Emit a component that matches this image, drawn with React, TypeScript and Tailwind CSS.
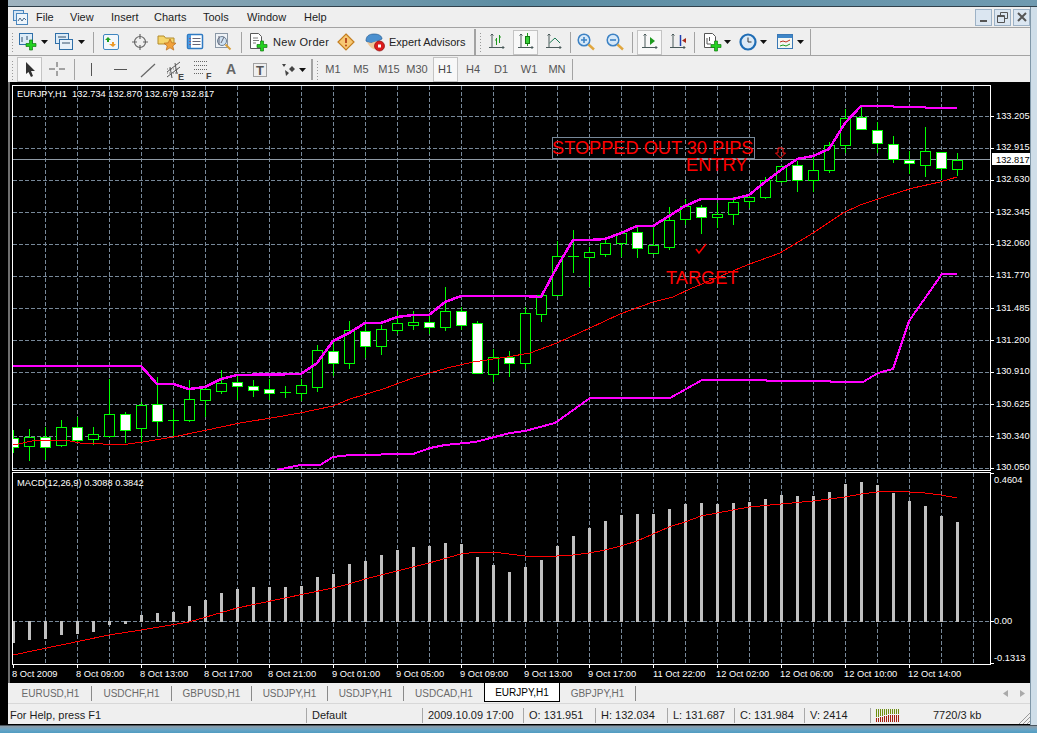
import React from "react";

type Candle = [number, number, number, number, number, number];
// x, body top, body bottom, wick top, wick bottom, white
const candles: Candle[] = [
  [13,438,447,430,453,1],[29,437,446,429,461,0],[45,437,447,427,460,1],[61,427,445,420,447,0],[77,427,440,417,443,1],
  [93,434,439,427,445,0],[109,414,436,379,437,0],[125,414,430,412,443,1],[141,405,428,402,443,0],[157,404,421,377,436,1],
  [173,420,420,409,437,0],[189,399,420,380,422,0],[205,389,400,387,417,0],[221,383,391,370,394,0],[237,382,386,375,400,1],
  [253,386,390,380,397,1],[269,389,393,379,400,1],[285,392,392,386,398,0],[301,385,393,379,401,0],[317,350,387,345,392,0],
  [333,351,363,340,376,1],[349,330,363,321,369,0],[365,331,346,324,358,1],[381,329,346,325,355,0],[397,323,330,311,334,0],
  [413,322,325,311,330,0],[429,322,327,315,334,1],[445,311,327,287,331,0],[461,311,325,307,330,1],[477,323,373,321,374,1],
  [493,357,374,349,382,0],[509,357,363,351,377,1],[525,313,363,307,369,0],[541,295,314,293,322,0],[557,256,295,241,295,0],
  [573,256,256,230,273,0],[589,252,257,247,287,0],[605,243,254,237,257,0],[621,233,243,230,257,0],[637,232,248,227,258,1],
  [653,245,253,226,253,0],[669,220,247,207,250,0],[685,206,219,199,225,0],[701,207,217,205,234,1],[717,214,217,203,228,0],
  [733,202,214,197,225,0],[749,197,201,195,208,0],[765,180,197,177,199,0],[781,166,181,166,183,0],[797,165,180,161,192,1],
  [813,170,180,155,192,0],[829,145,170,142,173,0],[845,118,145,109,153,0],[861,117,129,105,129,1],[877,130,143,122,153,1],
  [893,144,159,136,163,1],[909,160,163,151,174,1],[925,151,165,127,177,0],[941,152,168,152,179,1],[957,160,169,153,176,0],
];

const upper = "13,366 141,366 157,384 173,384 189,389 205,387 221,379 237,375 301,374 317,363 333,341 349,333 365,323 381,323 397,317 413,315 429,315 445,302 461,296 525,296 541,297 557,267 573,240 589,240 605,239 621,233 637,226 653,226 669,216 685,206 701,199 733,199 749,195 765,182 781,170 797,159 813,156 829,149 845,123 861,106 893,106 894,107 925,107 926,108 957,108";
const middle = "13,445 37,440 65,440 80,443 103,444 128,444 143,442 173,437 207,430 240,423 277,417 300,413 333,406 350,399 383,389 413,378 447,368 473,362 507,357 530,353 557,343 590,328 620,314 653,302 673,297 690,289 747,265 780,253 813,233 843,213 860,205 887,196 913,188 940,182 957,177";
const lower = "277,470 300,465 320,465 333,457 350,455 413,454 430,448 445,445 475,442 510,433 525,431 555,423 590,398 670,398 702,380 766,380 767,381 830,381 831,382 863,382 878,373 893,369 909,321 942,274 957,274";
const signal = "13,655 109,635 141,630 189,622 237,608 285,598 333,588 349,584 365,579 397,571 429,563 461,554 477,552 493,552 525,556 541,556 557,556 573,555 589,553 605,550 621,546 637,541 653,534 669,527 685,522 701,516 717,513 749,507 781,504 813,501 845,497 861,494 877,492 893,491 909,492 925,493 941,495 957,498";

const macd: [number, number][] = [
  [13,642],[29,639],[45,638],[61,634],[77,633],[93,631],[109,624],[125,623],[141,615],[157,613],[173,612],[189,606],[205,600],[221,593],[237,589],[253,587],[269,587],[285,587],[301,586],[317,577],[333,574],[349,564],[365,561],[381,555],[397,550],[413,547],[429,546],[445,543],[461,544],[477,557],[493,565],[509,572],[525,567],[541,560],[557,546],[573,536],[589,528],[605,521],[621,515],[637,514],[653,514],[669,509],[685,504],[701,503],[717,504],[733,503],[749,502],[765,499],[781,495],[797,496],[813,496],[829,492],[845,484],[861,482],[877,485],[893,493],[909,501],[925,506],[941,516],[957,522],
];

const gridX = Array.from({ length: 30 }, (_, i) => 45 + i * 32);
const gridY = Array.from({ length: 12 }, (_, i) => 116 + i * 32);
const prices: [string, number][] = [["133.205",119],["132.915",150],["132.630",182],["132.345",215],["132.060",246],["131.770",278],["131.485",311],["131.200",343],["130.910",374],["130.625",407],["130.340",439],["130.050",470]];
const times: [string, number][] = [["8 Oct 2009",12],["8 Oct 09:00",76],["8 Oct 13:00",140],["8 Oct 17:00",204],["8 Oct 21:00",268],["9 Oct 01:00",332],["9 Oct 05:00",396],["9 Oct 09:00",460],["9 Oct 13:00",524],["9 Oct 17:00",588],["11 Oct 22:00",653],["12 Oct 02:00",716],["12 Oct 06:00",780],["12 Oct 10:00",844],["12 Oct 14:00",908]];

function Chart() {
  return (
    <svg viewBox="8 82 1022 601" className="block w-[1022px] h-[601px] bg-black [font-family:'Liberation_Sans',sans-serif]">
      <defs>
        <clipPath id="plot"><rect x="13" y="86" width="977" height="384" /></clipPath>
        <clipPath id="plot2"><rect x="13" y="473" width="977" height="191" /></clipPath>
      </defs>
      <rect x="8" y="82" width="2" height="601" fill="#6e6e6e" />
      <g stroke="#778899" strokeDasharray="3.5 2.5" shapeRendering="crispEdges" strokeWidth="1">
        {gridX.map((x) => (
          <React.Fragment key={x}>
            <line x1={x + 0.5} x2={x + 0.5} y1="86" y2="470" />
            <line x1={x + 0.5} x2={x + 0.5} y1="473" y2="664" />
          </React.Fragment>
        ))}
        {gridY.map((y) => (
          <line key={y} x1="13" x2="990" y1={y + 0.5} y2={y + 0.5} />
        ))}
        <line x1="13" x2="990" y1="621.5" y2="621.5" />
      </g>
      <line x1="13" x2="990" y1="159.5" y2="159.5" stroke="#8f9aa5" shapeRendering="crispEdges" />
      <g clipPath="url(#plot)" shapeRendering="crispEdges">
        {candles.map(([x, t, b, h, l, w]) => (
          <g key={x} stroke="#00ff00">
            <line x1={x + 0.5} x2={x + 0.5} y1={h} y2={l} />
            {t === b ? (
              <line x1={x - 5} x2={x + 6} y1={t + 0.5} y2={t + 0.5} />
            ) : (
              <rect x={x - 4.5} y={t + 0.5} width="10" height={b - t} fill={w ? "#ffffff" : "#000000"} />
            )}
          </g>
        ))}
        <polyline points={middle} fill="none" stroke="#ff0000" strokeWidth="1" />
        <polyline points={upper} fill="none" stroke="#ff00ff" strokeWidth="2.5" />
        <polyline points={lower} fill="none" stroke="#ff00ff" strokeWidth="2" />
      </g>
      <rect x="552.5" y="137.5" width="202" height="21" fill="none" stroke="#778899" shapeRendering="crispEdges" />
      <g fill="#ff0000" className="text-[18.2px]">
        <text x="552" y="153.500">STOPPED OUT 30 PIPS</text>
        <text x="686" y="171">ENTRY</text>
        <text x="666" y="284">TARGET</text>
      </g>
      <path d="M778 148h5v5h2.500l-5 5-5-5h2.500z" fill="none" stroke="#ff1010" strokeWidth="1" />
      <path d="M696 249l3 4 7-9" fill="none" stroke="#ff0000" strokeWidth="1.5" />
      <g clipPath="url(#plot2)" shapeRendering="crispEdges">
        {macd.map(([x, y]) => (
          <rect key={x} x={x - 1} y={Math.min(y, 621)} width="3" height={Math.abs(621 - y) + 1} fill="#c0c0c0" />
        ))}
        <polyline points={signal} fill="none" stroke="#ff0000" strokeWidth="1" />
      </g>
      <g fill="none" stroke="#ffffff" shapeRendering="crispEdges">
        <rect x="12.5" y="85.500" width="978" height="385" />
        <rect x="12.5" y="472.500" width="978" height="192" />
        {times.map(([, x], i) => (
          <line key={i} x1={13 + i * 64 + 0.5} x2={13 + i * 64 + 0.5} y1="665" y2="668" />
        ))}
        {gridY.map((y) => (
          <line key={y} x1="991" x2="994" y1={y + 0.5} y2={y + 0.5} />
        ))}
        <line x1="991" x2="994" y1="473.500" y2="473.500" />
        <line x1="991" x2="994" y1="621.500" y2="621.500" />
        <line x1="991" x2="994" y1="663.500" y2="663.500" />
      </g>
      <g fill="#ffffff" className="text-[9.3px]">
        <text x="17" y="97">EURJPY,H1&#160;&#160;132.734 132.870 132.679 132.817</text>
        <text x="17" y="486">MACD(12,26,9) 0.3088 0.3842</text>
        {prices.map(([p, y]) => (
          <text key={p} x="996" y={y}>{p}</text>
        ))}
        <text x="994" y="483">0.4604</text>
        <text x="994" y="624">0.00</text>
        <text x="994" y="661">-0.1313</text>
        {times.map(([t, x]) => (
          <text key={t} x={x} y="677">{t}</text>
        ))}
      </g>
      <rect x="992" y="153" width="38" height="12" fill="#ffffff" />
      <text x="996" y="162.500" fill="#000000" className="text-[9.3px]">132.817</text>
    </svg>
  );
}

const Grip = ({ cls }: { cls: string }) => (
  <div className={`w-[3px] h-[20px] shrink-0 border-y-0 [background-image:radial-gradient(#9a9a9a_1px,transparent_1px)] [background-size:3px_3px] ${cls}`} />
);
const Sep = ({ cls }: { cls: string }) => <div className={`w-px h-[21px] shrink-0 bg-[#a3a3a3] ${cls}`} />;
const Slot = ({ cls, children }: { cls: string; children?: React.ReactNode }) => (
  <div className={`h-full flex items-center justify-center shrink-0 ${cls}`}>{children}</div>
);
const Box = ({ cls, children }: { cls: string; children?: React.ReactNode }) => (
  <div className={`h-[25px] flex items-center justify-center shrink-0 bg-[#f8f8f8] border border-[#c4c4c4] ${cls}`}>{children}</div>
);
const Drop = () => (
  <svg width="7" height="4" viewBox="0 0 7 4" className="shrink-0"><path d="M0 0h7L3.500 4z" fill="#111" /></svg>
);

const I = ({ children, w = 20, h = 20 }: { children: React.ReactNode; w?: number; h?: number }) => (
  <svg width={w} height={h} viewBox={`0 0 ${w} ${h}`} className="shrink-0">{children}</svg>
);
const Plus = ({ x, y }: { x: number; y: number }) => (
  <path transform={`translate(${x} ${y})`} d="M3.500 0h3v3.500H10v3H6.500V10h-3V6.500H0v-3h3.500z" fill="#22d11f" stroke="#127a12" strokeWidth="0.7" />
);
const Axes = () => (
  <path d="M5 2v14M2 15.500h15M3.500 3.500L5 2l1.500 1.500M15.500 14L17 15.500 15.500 17" fill="none" stroke="#4a5a5a" strokeWidth="1" />
);

const NewChart = () => (
  <I>
    <rect x="1.500" y="1.500" width="13" height="11" fill="#dcebf7" stroke="#2f6fa8" />
    <path d="M4 5v5M9 4v4" stroke="#35506a" />
    <Plus x={8} y={8} />
  </I>
);
const Profiles = () => (
  <I>
    <rect x="1.500" y="1.500" width="13" height="10" fill="#dcebf7" stroke="#2f6fa8" />
    <rect x="5.500" y="7.500" width="13" height="10" fill="#e8f1f9" stroke="#2f6fa8" />
    <path d="M4 5h8M8 11h8" stroke="#35506a" />
  </I>
);
const Market = () => (
  <I>
    <rect x="2.500" y="2.500" width="15" height="15" rx="1.500" fill="#f3f7fb" stroke="#3f86c0" />
    <path d="M6 5l3 3H7v2H5V8H3z" transform="translate(1 0)" fill="#20a020" />
    <path d="M12 15l3-3h-2v-2h-2v2H8z" fill="#ee9a28" />
  </I>
);
const Crosshair = () => (
  <I>
    <circle cx="10" cy="10" r="5.500" fill="none" stroke="#666" strokeWidth="1.200" />
    <path d="M10 2v5M10 13v5M2 10h5M13 10h5" stroke="#666" strokeWidth="1.200" />
  </I>
);
const FolderStar = () => (
  <I>
    <path d="M1 4h6l1.500 2H17v6H1z" fill="#f6d66d" stroke="#b28b2c" />
    <path d="M13 7l1.800 3.800 4.200.4-3.200 2.800 1 4.100-3.800-2.300-3.800 2.300 1-4.100L7 11.200l4.200-.4z" fill="#f2a23c" stroke="#b86a1a" strokeWidth="0.7" />
  </I>
);
const Navigator = () => (
  <I>
    <rect x="2.500" y="2.500" width="15" height="14" rx="1" fill="#fff" stroke="#2f7ac2" strokeWidth="1.500" />
    <rect x="3" y="3" width="3" height="13" fill="#4a9ae0" />
    <path d="M7.500 6.500h8M7.500 9.500h8M7.500 12.500h8" stroke="#667" />
    <path d="M5 6v1M5 9v1M5 12v1" stroke="#d02020" />
  </I>
);
const Tester = () => (
  <I>
    <rect x="2.500" y="1.500" width="12" height="14" fill="#eef2f6" stroke="#8a97a5" />
    <circle cx="9" cy="9" r="4.500" fill="#cfe2f2" stroke="#6c7f92" />
    <path d="M6 4v9M11 5l-3 6" stroke="#667" />
    <path d="M12.500 12.500l5 5" stroke="#d8a03c" strokeWidth="2" />
  </I>
);
const NewOrder = () => (
  <I>
    <path d="M2.500 1.500h8l3 3v12h-11z" fill="#fff" stroke="#5a5a5a" />
    <path d="M5 6h5M5 8.500h6M5 11h3" stroke="#7a7a7a" />
    <Plus x={9} y={9} />
  </I>
);
const Diamond = () => (
  <I>
    <path d="M10 2l8 8-8 8-8-8z" fill="#f7c873" stroke="#c47e20" strokeWidth="1.200" />
    <path d="M10 6v5" stroke="#b5431a" strokeWidth="1.800" />
    <circle cx="10" cy="13.500" r="1" fill="#b5431a" />
  </I>
);
const Expert = () => (
  <I w={22}>
    <path d="M2 9c0-5 3-7 8-7s8 2 8 5l-6 3c-4 1-8 1-10-1z" fill="#4b90cf" stroke="#2a5f94" strokeWidth="0.7" />
    <path d="M3 10c3 6 7 8 9 7l1-8-6 2z" fill="#f0c89a" />
    <circle cx="15.500" cy="14" r="5" fill="#dc1c1c" stroke="#8a1010" strokeWidth="0.7" />
    <rect x="14" y="12.500" width="3" height="3" fill="#fff" />
  </I>
);
const BarIcon = () => (
  <I>
    <Axes />
    <path d="M9.500 6v7M12.500 3v8M8 8h1.500M12.500 5H14" stroke="#1e9a1e" />
  </I>
);
const CandleIcon = () => (
  <I>
    <Axes />
    <path d="M11.500 1v13" stroke="#1e9a1e" />
    <rect x="9.500" y="4.500" width="4" height="7" fill="#38d038" stroke="#137a13" />
  </I>
);
const LineIcon = () => (
  <I>
    <Axes />
    <path d="M5.500 11L11 6l5 5" fill="none" stroke="#1e7a55" />
  </I>
);
const Zoom = ({ plus }: { plus?: boolean }) => (
  <I>
    <circle cx="8" cy="8" r="5.800" fill="#d6e8f8" stroke="#3d82c4" strokeWidth="1.500" />
    <path d={plus ? "M5 8h6M8 5v6" : "M5 8h6"} stroke="#3d82c4" strokeWidth="1.600" />
    <path d="M12.500 12.500l5.500 5" stroke="#e0a63e" strokeWidth="2.400" />
  </I>
);
const AutoScroll = () => (
  <I>
    <Axes />
    <path d="M10 5l5 4-5 4z" fill="#1e9a1e" />
  </I>
);
const Shift = () => (
  <I>
    <Axes />
    <path d="M12.500 3v11" stroke="#1f3fb0" strokeWidth="1.500" />
    <path d="M14 8.500l4-2.500v5z" fill="#a82a1a" />
  </I>
);
const AddDoc = () => (
  <I>
    <path d="M2.500 1.500h8l3 3v11h-11z" fill="#fff" stroke="#555" />
    <path d="M5 6v6h4M7.500 5v4" stroke="#555" fill="none" />
    <Plus x={9} y={9} />
  </I>
);
const Clock = () => (
  <I>
    <circle cx="10" cy="10" r="7.500" fill="#dceaf6" stroke="#1f6db5" strokeWidth="2.200" />
    <path d="M10 5.500V10h3.500" fill="none" stroke="#333" />
  </I>
);
const Template = () => (
  <I>
    <rect x="2.500" y="2.500" width="15" height="14" fill="#f4f7f3" stroke="#3a78b5" />
    <rect x="3" y="3" width="14" height="3" fill="#3f86c8" />
    <path d="M5 10l3-1 3 1 4-2" fill="none" stroke="#c03020" />
    <path d="M5 14l3-1 3 1 4-2" fill="none" stroke="#1f9a1f" />
  </I>
);
const Cursor = () => (
  <I>
    <path d="M6 2l9 9h-4l2 5-2 1-2.500-5L6 14z" fill="#333" />
  </I>
);
const ThinCross = () => (
  <I w={18}>
    <path d="M9 2v5M9 11v5M1 9h6M11 9h6" stroke="#555" />
  </I>
);
const Trend = () => (
  <I><path d="M3 17L17 4" stroke="#666" strokeWidth="1.200" /></I>
);
const Channel = () => (
  <I w={24} h={22}>
    <path d="M3 13L16 3M3 18L16 8M6 8l2 11M11 4l2 11" stroke="#555" fill="none" />
    <path d="M3 10h12M3 14h12" stroke="#777" strokeDasharray="1 1" />
    <text x="14" y="21" fill="#444" className="text-[9px] font-bold">E</text>
  </I>
);
const Fibo = () => (
  <I w={24} h={22}>
    <path d="M2 2.500h14M2 6.500h14M2 10.500h14M2 14.500h10" stroke="#666" strokeDasharray="1 1" />
    <text x="14" y="20" fill="#444" className="text-[9px] font-bold">F</text>
  </I>
);
const TextLabel = () => (
  <I w={18} h={18}>
    <rect x="2.500" y="2.500" width="13" height="13" fill="none" stroke="#555" strokeDasharray="1 1" />
    <text x="5" y="14" fill="#555" className="text-[13px] font-bold">T</text>
  </I>
);
const MoreShapes = () => (
  <I w={18} h={18}>
    <path d="M2 3l4 0-2 3zM9 8l3-3 3 3-3 3zM5 9l4 3-3 3z" fill="#444" />
  </I>
);

const menu: [string, string][] = [["File","w-[34px]"],["View","w-[41px]"],["Insert","w-[43px]"],["Charts","w-[49px]"],["Tools","w-[44px]"],["Window","w-[57px]"],["Help","w-[40px]"]];
const tfs = ["M1","M5","M15","M30","H1","H4","D1","W1","MN"];
const tabs: [string, string][] = [["EURUSD,H1","w-[82px]"],["USDCHF,H1","w-[80px]"],["GBPUSD,H1","w-[80px]"],["USDJPY,H1","w-[76px]"],["USDJPY,H1","w-[76px]"],["USDCAD,H1","w-[80px]"]];
const cells: [string, string][] = [["Default","w-[116px]"],["2009.10.09 17:00","w-[101px]"],["O: 131.951","w-[72px]"],["H: 132.034","w-[72px]"],["L: 131.687","w-[67px]"],["C: 131.984","w-[70px]"],["V: 2414","w-[66px]"]];

const winBtn = "w-[17px] h-[17px] bg-[#dbe6f1] border border-[#9db2c6] flex items-center justify-center";

export default function App() {
  return (
    <div className="w-[1037px] h-[733px] overflow-hidden flex flex-col bg-black text-[11px] text-[#1c1c1c] [font-family:'Liberation_Sans',sans-serif]">
      <div className="flex h-[725px]">
        <div className="w-[8px] bg-black shrink-0" />
        <div className="w-[1022px] flex flex-col shrink-0">
          <div className="h-[7px] bg-gradient-to-r from-[#9fb3bf] via-[#5c8da3] to-[#6f9ab0] border-b border-[#31414c]" />
          <div className="h-[21px] flex items-center bg-[#efefef] border-b border-[#a3a3a3]">
            <div className="ml-[5px] w-[14px] mr-[9px] shrink-0">
              <svg width="15" height="15" viewBox="0 0 15 15">
                <rect x="0.500" y="0.500" width="10" height="10" fill="#d6e6f4" stroke="#4a86bd" />
                <rect x="3.500" y="3.500" width="11" height="11" fill="#eef5fb" stroke="#4a86bd" />
                <path d="M5 11l2-3 2 3 2-3 2 2" fill="none" stroke="#4a6a8a" />
              </svg>
            </div>
            {menu.map(([m, w]) => (
              <div key={m} className={`${w} shrink-0`}>{m}</div>
            ))}
            <div className="ml-auto flex gap-[2px] items-center">
              <div className={winBtn}><span className="w-[7px] h-[2px] bg-[#555] mt-[7px]" /></div>
              <div className={winBtn}>
                <svg width="11" height="11" viewBox="0 0 11 11"><path d="M3.500 3V.5h7v6H8M.5 3.500h7v7h-7zM.5 4.500h7" fill="none" stroke="#555" /></svg>
              </div>
              <div className={winBtn}>
                <svg width="10" height="10" viewBox="0 0 10 10"><path d="M1 1l8 8M9 1l-8 8" stroke="#555" strokeWidth="2" /></svg>
              </div>
            </div>
          </div>
          <div className="h-[27px] pt-px flex items-center bg-[#efefef] text-[#222]">
            <Grip cls="ml-[3px]" />
            <Slot cls="w-[28px]"><NewChart /></Slot>
            <Slot cls="w-[4px]"><Drop /></Slot>
            <Slot cls="ml-[4px] w-[28px]"><Profiles /></Slot>
            <Slot cls="w-[6px]"><Drop /></Slot>
            <Sep cls="ml-[9px]" />
            <Slot cls="w-[34px]"><Market /></Slot>
            <Slot cls="w-[24px]"><Crosshair /></Slot>
            <Slot cls="w-[30px]"><FolderStar /></Slot>
            <Slot cls="w-[26px]"><Navigator /></Slot>
            <Slot cls="w-[30px]"><Tester /></Slot>
            <Sep cls="ml-[3px]" />
            <Slot cls="ml-[6px] w-[20px]"><NewOrder /></Slot>
            <div className="ml-[5px] w-[58px] shrink-0 tracking-[0.35px] whitespace-nowrap">New Order</div>
            <Slot cls="w-[30px]"><Diamond /></Slot>
            <Slot cls="w-[28px]"><Expert /></Slot>
            <div className="w-[80px] shrink-0 whitespace-nowrap">Expert Advisors</div>
            <div className="ml-[5px] w-[2px] h-[26px] shrink-0 bg-[#a3a3a3]" />
            <Grip cls="ml-[3px]" />
            <Slot cls="w-[30px]"><BarIcon /></Slot>
            <Box cls="ml-[1px] w-[25px]"><CandleIcon /></Box>
            <Slot cls="w-[32px]"><LineIcon /></Slot>
            <Sep cls="" />
            <Slot cls="w-[30px]"><Zoom plus /></Slot>
            <Slot cls="w-[28px]"><Zoom /></Slot>
            <Sep cls="ml-[3px]" />
            <Box cls="ml-[4px] w-[25px]"><AutoScroll /></Box>
            <Slot cls="w-[32px]"><Shift /></Slot>
            <Sep cls="" />
            <Slot cls="ml-[5px] w-[24px]"><AddDoc /></Slot>
            <Slot cls="w-[6px]"><Drop /></Slot>
            <Slot cls="ml-[6px] w-[24px]"><Clock /></Slot>
            <Slot cls="w-[6px]"><Drop /></Slot>
            <Slot cls="ml-[7px] w-[24px]"><Template /></Slot>
            <Slot cls="w-[6px]"><Drop /></Slot>
            <div className="ml-[7px] w-px h-[26px] shrink-0 bg-[#a3a3a3]" />
          </div>
          <div className="h-[27px] pt-px flex items-center bg-[#efefef] border-t border-[#a3a3a3] text-[#555]">
            <Grip cls="ml-[3px]" />
            <Box cls="ml-[3px] w-[25px]"><Cursor /></Box>
            <Slot cls="w-[30px]"><ThinCross /></Slot>
            <Sep cls="ml-[2px]" />
            <Slot cls="w-[32px]"><span className="w-px h-[13px] bg-[#555]" /></Slot>
            <Slot cls="w-[26px]"><span className="w-[13px] h-px bg-[#555]" /></Slot>
            <Slot cls="w-[30px]"><Trend /></Slot>
            <Slot cls="w-[26px]"><Channel /></Slot>
            <Slot cls="w-[30px]"><Fibo /></Slot>
            <Slot cls="w-[24px]"><span className="text-[14px] font-bold text-[#666]">A</span></Slot>
            <Slot cls="w-[34px]"><TextLabel /></Slot>
            <Slot cls="ml-[3px] w-[18px]"><MoreShapes /></Slot>
            <Slot cls="ml-[1px] w-[6px]"><Drop /></Slot>
            <Sep cls="ml-[6px] !w-[2px]" />
            <Grip cls="ml-[3px]" />
            {tfs.map((t) =>
              t === "H1" ? (
                <div key={t} className="w-[28px] flex justify-center shrink-0">
                  <Box cls="w-[25px] text-[#444]">{t}</Box>
                </div>
              ) : (
                <Slot key={t} cls="w-[28px]">{t}</Slot>
              )
            )}
            <Sep cls="ml-px" />
          </div>
          <Chart />
          <div className="h-[21px] flex items-center bg-[#efefef] text-[10px] text-[#6a6a6a] pl-[2px] pt-px border-b border-[#d8d8d8]">
            {tabs.map(([t, w], i) => (
              <div key={i} className={`${w} h-[15px] flex items-center justify-center shrink-0 ${i < 5 ? "border-r border-[#8a8a8a]" : ""}`}>{t}</div>
            ))}
            <div className="w-[76px] h-[19px] -mt-px flex items-center justify-center shrink-0 bg-white text-black border-x border-b border-black self-start">EURJPY,H1</div>
            <div className="w-[76px] h-[15px] flex items-center justify-center shrink-0 border-r border-[#8a8a8a]">GBPJPY,H1</div>
            <div className="ml-auto mr-[5px] flex gap-[12px] items-center">
              <svg width="5" height="7" viewBox="0 0 5 7"><path d="M5 0v7L0 3.500z" fill="#aaa" /></svg>
              <svg width="5" height="7" viewBox="0 0 5 7"><path d="M0 0v7l5-3.500z" fill="#aaa" /></svg>
            </div>
          </div>
          <div className="h-[20px] pt-[2px] flex items-center bg-[#efefef] relative">
            <div className="w-[298px] pl-[2px] shrink-0">For Help, press F1</div>
            {cells.map(([c, w]) => (
              <div key={c} className={`${w} h-[15px] flex items-center pl-[5px] border-l border-[#a8a8a8] shrink-0 whitespace-nowrap`}>{c}</div>
            ))}
            <div className="h-[15px] w-[156px] flex items-center border-l border-[#a8a8a8] shrink-0">
              <svg width="24" height="13" viewBox="0 0 24 13" className="ml-[5px] shrink-0" shapeRendering="crispEdges">
                {Array.from({ length: 12 }, (_, i) => (
                  <g key={i}>
                    <rect x={i * 2} y={0} width="1" height={i < 6 ? 8 - i * 0.5 : 5} fill="#6e8f10" />
                    <rect x={i * 2} y={i < 6 ? 9 - i * 0.5 : 6} width="1" height={i < 6 ? 4 + i * 0.5 : 7} fill="#a51c10" />
                  </g>
                ))}
              </svg>
              <span className="ml-[33px] whitespace-nowrap">7720/3 kb</span>
            </div>
            <svg width="12" height="12" viewBox="0 0 12 12" className="absolute right-0 bottom-0">
              <path d="M12 1L1 12M12 5L5 12M12 9L9 12" stroke="#9a9a9a" />
            </svg>
          </div>
        </div>
        <div className="w-[7px] shrink-0 flex flex-col">
          <div className="h-[7px] bg-[#6f9ab0] border-b border-[#31414c]" />
          <div className="flex-1 bg-[#cfdee9] border-l border-[#7f97a8]" />
        </div>
      </div>
      <div className="h-[8px] bg-gradient-to-b from-[#8f9ba5] via-[#6aa5c5] to-[#4f9cc2] border-t border-[#4a5660]" />
    </div>
  );
}
